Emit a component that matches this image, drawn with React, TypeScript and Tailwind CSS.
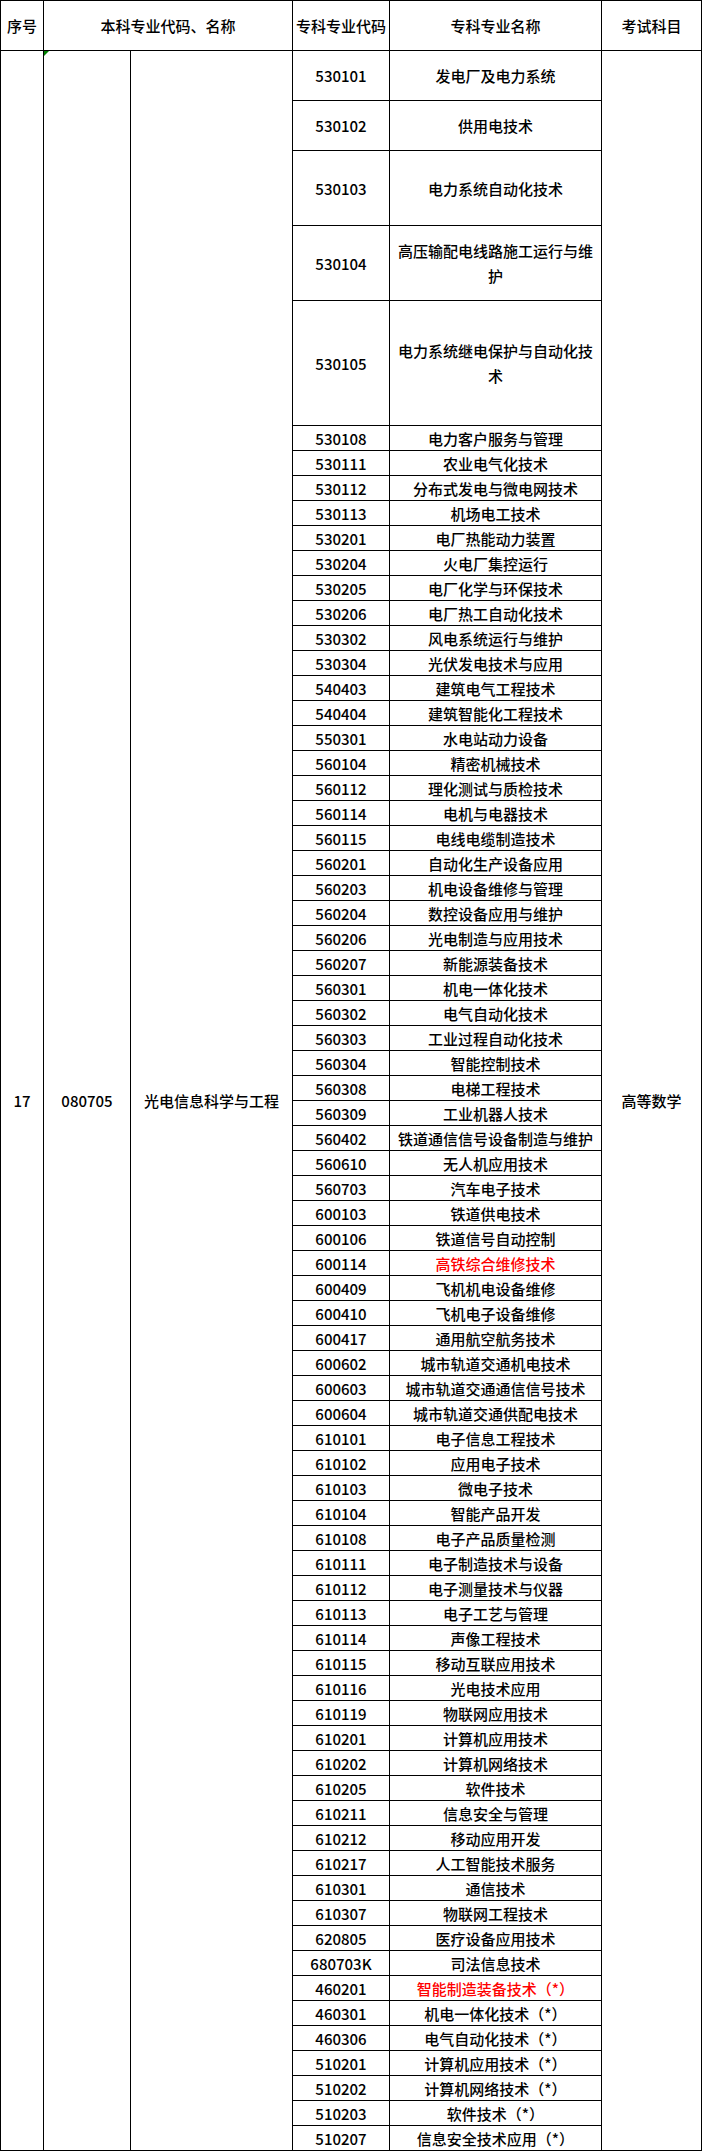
const font = { fontFamily: '"Noto Sans CJK SC", "Noto Sans", sans-serif' };

type Row = { code: string; name: string; h?: string; red?: boolean };

const tallRows: Row[] = [
  { code: "530101", name: "发电厂及电力系统", h: "h-[50px]" },
  { code: "530102", name: "供用电技术", h: "h-[50px]" },
  { code: "530103", name: "电力系统自动化技术", h: "h-[75px]" },
  { code: "530104", name: "高压输配电线路施工运行与维护", h: "h-[75px]" },
  { code: "530105", name: "电力系统继电保护与自动化技术", h: "h-[125px]" },
];

const list: [string, string][] = [
  ["530108", "电力客户服务与管理"],
  ["530111", "农业电气化技术"],
  ["530112", "分布式发电与微电网技术"],
  ["530113", "机场电工技术"],
  ["530201", "电厂热能动力装置"],
  ["530204", "火电厂集控运行"],
  ["530205", "电厂化学与环保技术"],
  ["530206", "电厂热工自动化技术"],
  ["530302", "风电系统运行与维护"],
  ["530304", "光伏发电技术与应用"],
  ["540403", "建筑电气工程技术"],
  ["540404", "建筑智能化工程技术"],
  ["550301", "水电站动力设备"],
  ["560104", "精密机械技术"],
  ["560112", "理化测试与质检技术"],
  ["560114", "电机与电器技术"],
  ["560115", "电线电缆制造技术"],
  ["560201", "自动化生产设备应用"],
  ["560203", "机电设备维修与管理"],
  ["560204", "数控设备应用与维护"],
  ["560206", "光电制造与应用技术"],
  ["560207", "新能源装备技术"],
  ["560301", "机电一体化技术"],
  ["560302", "电气自动化技术"],
  ["560303", "工业过程自动化技术"],
  ["560304", "智能控制技术"],
  ["560308", "电梯工程技术"],
  ["560309", "工业机器人技术"],
  ["560402", "铁道通信信号设备制造与维护"],
  ["560610", "无人机应用技术"],
  ["560703", "汽车电子技术"],
  ["600103", "铁道供电技术"],
  ["600106", "铁道信号自动控制"],
  ["600114", "高铁综合维修技术"],
  ["600409", "飞机机电设备维修"],
  ["600410", "飞机电子设备维修"],
  ["600417", "通用航空航务技术"],
  ["600602", "城市轨道交通机电技术"],
  ["600603", "城市轨道交通通信信号技术"],
  ["600604", "城市轨道交通供配电技术"],
  ["610101", "电子信息工程技术"],
  ["610102", "应用电子技术"],
  ["610103", "微电子技术"],
  ["610104", "智能产品开发"],
  ["610108", "电子产品质量检测"],
  ["610111", "电子制造技术与设备"],
  ["610112", "电子测量技术与仪器"],
  ["610113", "电子工艺与管理"],
  ["610114", "声像工程技术"],
  ["610115", "移动互联应用技术"],
  ["610116", "光电技术应用"],
  ["610119", "物联网应用技术"],
  ["610201", "计算机应用技术"],
  ["610202", "计算机网络技术"],
  ["610205", "软件技术"],
  ["610211", "信息安全与管理"],
  ["610212", "移动应用开发"],
  ["610217", "人工智能技术服务"],
  ["610301", "通信技术"],
  ["610307", "物联网工程技术"],
  ["620805", "医疗设备应用技术"],
  ["680703K", "司法信息技术"],
  ["460201", "智能制造装备技术（*）"],
  ["460301", "机电一体化技术（*）"],
  ["460306", "电气自动化技术（*）"],
  ["510201", "计算机应用技术（*）"],
  ["510202", "计算机网络技术（*）"],
  ["510203", "软件技术（*）"],
  ["510207", "信息安全技术应用（*）"],
];

const redCodes = ["600114", "460201"];

const rows: Row[] = [
  ...tallRows,
  ...list.map(([code, name]) => ({ code, name, h: "h-[25px]", red: redCodes.includes(code) })),
];

const cell = "flex items-center justify-center border-r border-b border-black text-center";

export default function App() {
  return (
    <div className="w-[702px] bg-white text-[15px] font-medium text-black leading-[25px]" style={font}>
      <div className="border-l border-t border-black">
        {/* header */}
        <div className="flex h-[50px]">
          <div className={`${cell} w-[43px] whitespace-nowrap`}>序号</div>
          <div className={`${cell} w-[249px] whitespace-nowrap`}>本科专业代码、名称</div>
          <div className={`${cell} w-[97px] whitespace-nowrap`}>专科专业代码</div>
          <div className={`${cell} w-[212px] whitespace-nowrap`}>专科专业名称</div>
          <div className={`${cell} w-[100px] whitespace-nowrap`}>考试科目</div>
        </div>

        {/* body */}
        <div className="flex">
          <div className={`${cell} w-[43px]`}>17</div>
          <div className={`${cell} relative w-[87px]`}>
            <span className="absolute left-0 top-0 h-0 w-0 border-t-[5px] border-r-[5px] border-t-[#008000] border-r-transparent" />
            080705
          </div>
          <div className={`${cell} w-[162px]`}>光电信息科学与工程</div>
          <div className="flex w-[309px] flex-col">
            {rows.map((r) => (
              <div key={r.code} className={`flex ${r.h}`}>
                <div className={`${cell} w-[97px]`}>{r.code}</div>
                <div className={`${cell} w-[212px] px-1 ${r.red ? "text-[#ff0000]" : ""}`}>{r.name}</div>
              </div>
            ))}
          </div>
          <div className={`${cell} w-[100px]`}>高等数学</div>
        </div>
      </div>
    </div>
  );
}
